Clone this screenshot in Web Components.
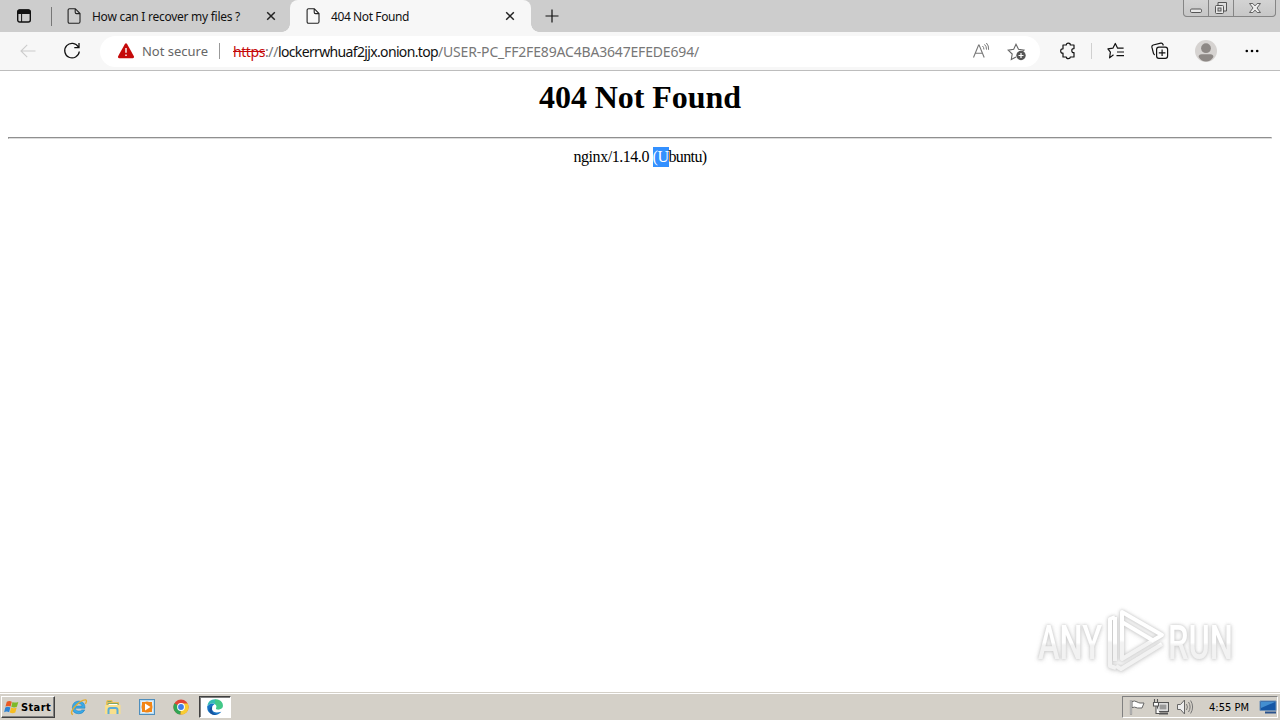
<!DOCTYPE html>
<html lang="en">
<head>
<meta charset="utf-8">
<title>404 Not Found</title>
<style>
  html, body { margin: 0; height: 100%; overflow: hidden; }
  body { background: #fff; font: 12px "Noto Sans", "Open Sans", sans-serif; color: #111; }
</style>
</head>
<body>
<desktop-screen>
  <tab-strip slot="browser">
    <browser-tab label="How can I recover my files ?" text-width="148"></browser-tab>
    <browser-tab label="404 Not Found" text-width="78" active></browser-tab>
  </tab-strip>
  <nav-bar slot="browser"></nav-bar>
  <error-page slot="browser"></error-page>
  <task-bar slot="taskbar"></task-bar>
  <run-watermark slot="overlay"></run-watermark>
</desktop-screen>

<script>
const icons = {
  tabs: [16, 16, `<rect x="1.7" y="2" width="12.6" height="12" rx="2" fill="none" stroke="#111" stroke-width="1.4"/><path d="M1.5 6V3.5Q1.5 1.6 3.5 1.6h9q2 0 2 1.9V6z" fill="#111"/><path d="M5.6 6v8" stroke="#111"/>`],
  page: [14, 16, `<path d="M2.5.7h5.8L13 5.5v8.3q0 1.4-1.4 1.4H2.5q-1.4 0-1.4-1.4V2.1Q1.1.7 2.5.7zM8.2.8v3.5q0 1.3 1.3 1.3H13" fill="none" stroke="#222" stroke-width="1.1"/>`],
  close: [10, 10, `<path d="M1.2 1.2l7.6 7.6M8.8 1.2L1.2 8.8" stroke="#222" stroke-width="1.5"/>`],
  plus: [14, 14, `<path d="M7 .5v13M.5 7h13" stroke="#111" stroke-width="1.2"/>`],
  back: [16, 14, `<path d="M15.5 7H1M7.2.8L1 7l6.2 6.2" fill="none" stroke="#ccc" stroke-width="1.1"/>`],
  reload: [18, 18, `<path d="M15.4 5A7.3 7.3 0 1 0 16.3 9.5M16 1v4.7h-4.7" fill="none" stroke="#111" stroke-width="1.3"/>`],
  warn: [18, 16, `<path d="M7.9 1.1q1.1-1.5 2.2 0l6.8 12.2q.6 1.7-1 1.9H2.1q-1.6-.2-1-1.9z" fill="#c50a0a"/><path d="M9 5v4.8M9 11.4v1.5" stroke="#fff" stroke-width="1.4"/>`],
  read: [18, 18, `<path d="M1.5 15.5L6.6 3h.5l5.1 12.5M3.2 11.3h7.3" fill="none" stroke="#777" stroke-width="1.1"/><path d="M10.5 4q1.5 1.4 1.4 3.5M12.5 2.4q2.2 2 2 5.2M14.4 1q2.6 2.6 2.2 6.8" fill="none" stroke="#777"/>`],
  addstar: [20, 20, `<path d="M9 16l-4.7 2.5.9-5.5-4-3.9 5.5-.8L9 3.2l2.5 5.1 5.5.8-1.7 1.7" fill="none" stroke="#666" stroke-width="1.1"/><circle cx="14" cy="14.5" r="4.7" fill="#555"/><path d="M14 12v5M11.5 14.5h5" stroke="#fff" stroke-width="1.2"/>`],
  puzzle: [18, 18, `<path d="M4 3h3.300q0-1.800 2-1.800t2 1.800H15v3.600q-2.200-.2-2.200 2t2.200 2.100V15h-3.700q0 1.700-2 1.700t-2-1.700H4v-3.800Q1.700 11.400 1.700 9T4 6.800z" fill="none" stroke="#111" stroke-width="1.200" stroke-linejoin="round"/>`],
  favs: [18, 18, `<path d="M6.500 12.800l-3.900 3.100.8-5.800L.9 6.900l5-.7L8.300 1.500l2.300 4.700h6M10 10h7M9.500 13.700H17" fill="none" stroke="#111" stroke-width="1.200" stroke-linejoin="round"/>`],
  collections: [18, 18, `<path d="M3.800 12.800Q2.700 12.500 2.400 11.200L.9 5.200Q.6 3.500 2.200 3L9.800 1.200q1.700-.3 2.200 1.300l.3 1" fill="none" stroke="#111" stroke-width="1.200"/><rect x="5.600" y="5.200" width="11" height="11.200" rx="2.300" fill="none" stroke="#111" stroke-width="1.200"/><path d="M11.100 7.500v6.600M7.800 10.800h6.600" stroke="#111" stroke-width="1.200"/>`],
  avatar: [22, 22, `<circle cx="11" cy="11" r="11" fill="#d6d3d1"/><circle cx="11" cy="8.200" r="4.900" fill="#8d8885"/><path d="M3.600 17q0-2.800 3-2.800h8.800q3 0 3 2.800Q15.500 21.500 11 21.500T3.600 17z" fill="#8d8885"/>`],
  dots: [14, 4, `<circle cx="1.800" cy="2" r="1.300"/><circle cx="7" cy="2" r="1.300"/><circle cx="12.200" cy="2" r="1.300"/>`],
  min: [14, 14, `<rect x="1.500" y="8" width="11" height="3.500" rx="1.200" fill="#e8e8e8" stroke="#555"/>`],
  restore: [14, 14, `<path d="M4 4V1.500h8.500V10H10" fill="#ddd" stroke="#555"/><rect x="1.500" y="4.500" width="8" height="8" rx="1" fill="#e8e8e8" stroke="#555"/><rect x="4" y="7" width="3" height="3" fill="#ccc" stroke="#555"/>`],
  wclose: [14, 14, `<path d="M1.500 2.500h3.300L7 4.900l2.200-2.400h3.300L9 7l3.500 4.500H9.200L7 9.100l-2.200 2.400H1.500L5 7z" fill="#eee" stroke="#555" stroke-width=".9"/>`],
  flagwin: [16, 16, `<path d="M2.800 2.700q2.500-1.300 5 0L6.600 7.500q-2.500-1.200-5.100 0z" fill="#ea5a24"/><path d="M8.500 3q2.700 1.200 5.800-.1l-1.400 4.900q-2.800 1.200-5.600 0z" fill="#7db928"/><path d="M1.300 8.400q2.600-1.200 5.100 0l-1.300 4.800q-2.500-1.200-5 0z" fill="#2e83d4"/><path d="M7.100 8.600q2.700 1.200 5.600 0l-1.400 4.900q-2.800 1.300-5.500-.1z" fill="#f6bd22"/>`],
  ie: [18, 18, `<path d="M15 10.200H5.200q.2 2.900 3.600 2.900 2 0 3-1.200h3Q13 15.800 8.800 15.800 2.300 15.500 2.300 9.400 2.700 3.300 9 3q6.200.5 6 7.200zM5.300 8h6.800Q11.700 5.500 8.800 5.500T5.300 8z" fill="#3aaae6" stroke="#1979bb" stroke-width=".5"/><path d="M3 16.500Q-.5 15.500 4 9.600 11 1.500 15.700 1.900q1.600.8-.3 4" fill="none" stroke="#e5ad2e" stroke-width="1.400"/>`],
  folder: [18, 18, `<path d="M2 4l1-2h5l1 2h6v11H2z" fill="#e8bf5b"/><path d="M3.500 3.500h4M4 5.500h10v3H4z" stroke="#80a665" fill="#fff"/><path d="M1 7h15.500v9H1z" fill="#f8df8c"/><path d="M4.500 16v-4q0-2 2-2h5q2 0 2 2v4" fill="none" stroke="#58acd8" stroke-width="2"/>`],
  media: [18, 18, `<rect x="1.500" y="1.500" width="15" height="15" fill="#b8dcf2" stroke="#4f8ebc"/><rect x="3.500" y="3.500" width="11" height="11" fill="#f28616" stroke="#e2effa"/><circle cx="9" cy="9" r="5.500" fill="#f28616"/><path d="M7 5.500v7L12.500 9z" fill="#fff"/>`],
  chrome: [18, 18, `<circle cx="9" cy="9" r="7.600" fill="#e14434"/><path d="M9 9L2.400 5.200A7.600 7.600 0 0 0 8.500 16.600z" fill="#30a554"/><path d="M9 9l-.5 7.600A7.600 7.600 0 0 0 15.700 5.400H9z" fill="#f8cd32"/><circle cx="9" cy="9" r="3.900" fill="#fff"/><circle cx="9" cy="9" r="2.900" fill="#3f7ee8"/>`],
  edge: [18, 18, `<path d="M1.200 8Q2.300 1.400 9 1.200q7.500.3 7.900 6.300-.2 3.800-4.200 3.900-3.200 0-2.700-1.200 1.500-2.200-.8-4Q5 4.300 1.200 8z" fill="#35bdb4"/><path d="M9 1.200q7.500.3 7.900 6.300-.2 3.800-4.200 3.900-3.200 0-2.700-1.200 1.500-2.200-.8-4z" fill="#4dce68" opacity=".6"/><path d="M1.100 8.500q3.300-4.400 7.500-2.300-3.400 1.500-2.600 5.300 1.500 4.500 9.300 2.300-2.400 3.300-6.800 3.100Q1 16.200 1.100 8.500z" fill="#1674c5"/><path d="M6 11.500q-.2 4 4.500 5.200-3.800.9-6.500-1.600-2-4.500 2.200-7z" fill="#15539e"/>`],
  flag: [18, 18, `<path d="M3 2v14.500" stroke="#777" stroke-width="2.200"/><path d="M4 3.500q2.500-1.200 5 .4 1.800 1 3 1.100h4l-2 5H9.500q-3-1.500-5.500-.4z" fill="#fff" stroke="#666"/><path d="M3 2v14" stroke="#fff" stroke-width=".8"/>`],
  network: [18, 18, `<rect x="5.500" y="4.500" width="11" height="9" fill="#c6c6c6" stroke="#555"/><rect x="7" y="6" width="8" height="6" fill="#999" stroke="#eee"/><path d="M7 15.500h9" stroke="#555" stroke-width="2"/><path d="M2.500 1v3M5.500 1v3M1.500 4.500h5V8h-5zM4 8v7.500h4" fill="#fff" stroke="#555" stroke-width="1.100"/>`],
  sound: [18, 18, `<path d="M1.500 6.500h3l4-4.500v14l-4-4.500h-3z" fill="#eee" stroke="#666"/><path d="M10.500 6q1.800 3 0 6M12.500 4q3.200 5 0 10M14.600 2.500q4 6.500 0 13" fill="none" stroke="#777"/>`],
  screen: [18, 16, `<path d="M1 2h16v9.500H1z" fill="#1557a6" stroke="#6d91b8"/><path d="M2 3h14L2 9z" fill="#438ed0"/><path d="M6 13.500h11" stroke="#29528c" stroke-width="2"/>`]
};

class UiIcon extends HTMLElement {
  connectedCallback() {
    const [w, h, body] = icons[this.getAttribute("name")];
    this.attachShadow({ mode: "open" }).innerHTML = `
      <style>:host { display: block; flex: none; width: ${w}px; height: ${h}px; } svg { display: block; }</style>
      <svg width="${w}" height="${h}" viewBox="0 0 ${w} ${h}">${body}</svg>`;
  }
}

// Single line label, tracked so that it fills the given width.
class UiLabel extends HTMLElement {
  connectedCallback() {
    this.attachShadow({ mode: "open" }).innerHTML = `
      <style>
        :host { display: block; flex: none; }
        span { display: block; width: max-content; white-space: pre; }
      </style><span><slot></slot></span>`;
    const span = this.shadowRoot.querySelector("span");
    const width = parseFloat(this.getAttribute("width"));
    const gap = (width - span.getBoundingClientRect().width) / this.textContent.length;
    span.style.letterSpacing = `${gap}px`;
    this.style.width = `${width}px`;
  }
}

class DesktopScreen extends HTMLElement {
  constructor() {
    super();
    this.attachShadow({ mode: "open" }).innerHTML = `
      <style>
        :host { display: flex; flex-direction: column; width: 1280px; height: 720px; position: relative; }
        main { flex: 1; display: flex; flex-direction: column; min-height: 0; }
      </style>
      <main><slot name="browser"></slot></main>
      <slot name="taskbar"></slot>
      <slot name="overlay"></slot>`;
  }
}

class TabStrip extends HTMLElement {
  constructor() {
    super();
    this.attachShadow({ mode: "open" }).innerHTML = `
      <style>
        :host { display: flex; flex: none; height: 32px; align-items: center; background: #cdcdcd; }
        .menu { margin-left: 16px; }
        .sep { width: 1px; height: 19px; background: #777; margin: 0 0 0 19px; }
        .plus { margin-left: 14px; }
        .win { display: grid; grid-template-columns: 24px 24px 41px; gap: 1px; height: 16px; margin-left: auto;
          margin-right: 4px; align-self: start; background: #858585; border: 1px solid #858585; border-top: 0;
          border-radius: 0 0 4px 4px; overflow: hidden; }
        .win div { display: grid; place-items: center; background: linear-gradient(#d3d3d3, #c7c7c7); }
      </style>
      <ui-icon class="menu" name="tabs"></ui-icon>
      <div class="sep"></div>
      <slot></slot>
      <ui-icon class="plus" name="plus"></ui-icon>
      <div class="win">
        <div><ui-icon name="min"></ui-icon></div>
        <div><ui-icon name="restore"></ui-icon></div>
        <div><ui-icon name="wclose"></ui-icon></div>
      </div>`;
  }
}

class BrowserTab extends HTMLElement {
  connectedCallback() {
    this.attachShadow({ mode: "open" }).innerHTML = `
      <style>
        :host { display: flex; box-sizing: border-box; align-items: center; width: 237px; height: 32px; padding: 0 13px 0 15px; }
        :host([active]) { width: 241px; padding: 0 16px 0 16px; margin-left: 1px; border-radius: 8px 8px 0 0; background: #f7f7f7; position: relative; }
        :host([active])::before, :host([active])::after { content: ""; position: absolute; bottom: 0; width: 8px; height: 8px; }
        :host([active])::before { left: -8px; background: radial-gradient(circle at 0 0, transparent 7.500px, #f7f7f7 8px); }
        :host([active])::after { right: -8px; background: radial-gradient(circle at 100% 0, transparent 7.500px, #f7f7f7 8px); }
        ui-label { margin: 0 auto 0 11px; }
      </style>
      <ui-icon name="page"></ui-icon>
      <ui-label width="${this.getAttribute("text-width")}">${this.getAttribute("label")}</ui-label>
      <ui-icon name="close"></ui-icon>`;
  }
}

class NavBar extends HTMLElement {
  constructor() {
    super();
    this.attachShadow({ mode: "open" }).innerHTML = `
      <style>
        :host { display: flex; flex: none; box-sizing: border-box; height: 39px; align-items: center; padding: 0 0 0 20px; background: #f7f7f7; border-bottom: 1px solid #bdbdbd; font-size: 14px; }
        .address { display: flex; align-items: center; box-sizing: border-box; width: 940px; height: 31px; margin-left: 19px; padding: 0 13px 0 17px; border-radius: 16px; background: #fff; }
        .state { margin-left: 7px; color: #666; font-size: 13px; }
        .sep { width: 1px; height: 16px; background: #999; margin: 0 13px 0 11px; }
        .url { display: flex; color: #777; }
        .scheme { color: #c50a0a; text-decoration: line-through; }
        .host { color: #111; }
        .read { margin-left: auto; margin-right: 17px; }
        .tools { display: flex; align-items: center; margin-left: 19px; }
        .tools .sep { margin: 0 15px 0 14px; background: #d0d0d0; }
        .tools ui-icon + ui-icon { margin-left: 26px; }
        .tools ui-icon[name="dots"] { margin-left: 28px; }
      </style>
      <ui-icon name="back"></ui-icon>
      <ui-icon name="reload" style="margin-left:27px"></ui-icon>
      <div class="address">
        <ui-icon name="warn"></ui-icon>
        <ui-label class="state" width="66">Not secure</ui-label>
        <div class="sep"></div>
        <div class="url">
          <ui-label class="scheme" width="32">https</ui-label>
          <ui-label width="13">://</ui-label>
          <ui-label class="host" width="160">lockerrwhuaf2jjx.onion.top</ui-label>
          <ui-label width="261">/USER-PC_FF2FE89AC4BA3647EFEDE694/</ui-label>
        </div>
        <ui-icon class="read" name="read"></ui-icon>
        <ui-icon name="addstar"></ui-icon>
      </div>
      <div class="tools">
        <ui-icon name="puzzle"></ui-icon>
        <div class="sep"></div>
        <ui-icon name="favs"></ui-icon>
        <ui-icon name="collections"></ui-icon>
        <ui-icon name="avatar"></ui-icon>
        <ui-icon name="dots"></ui-icon>
      </div>`;
  }
}

class ErrorPage extends HTMLElement {
  constructor() {
    super();
    this.attachShadow({ mode: "open" }).innerHTML = `
      <style>
        :host { display: flex; flex-direction: column; align-items: center; flex: 1; padding: 8px 8px 0; color: #000; font-family: "Liberation Serif", "Times New Roman", serif; }
        h1 { margin: 0; font-size: 32px; line-height: 37px; }
        hr { width: 100%; box-sizing: border-box; margin: 21px 0 8px; border: 1px solid; border-color: #8f8f8f #ddd #ddd #8f8f8f; }
        p { display: flex; margin: 0; font-size: 16px; line-height: 20px; }
        .picked { background: #3390ff; color: #fff; }
      </style>
      <h1><ui-label width="202">404 Not Found</ui-label></h1>
      <hr>
      <p><ui-label width="79">nginx/1.14.0 </ui-label><ui-label class="picked" width="16">(U</ui-label><ui-label width="38">buntu)</ui-label></p>`;
  }
}

class TaskBar extends HTMLElement {
  constructor() {
    super();
    this.attachShadow({ mode: "open" }).innerHTML = `
      <style>
        :host { display: flex; flex: none; box-sizing: border-box; height: 28px; align-items: center; border-top: 1px solid #d4d0c8; box-shadow: inset 0 1px #fff; background: #d4d0c8; font: 11px "DejaVu Sans Condensed", "DejaVu Sans", sans-serif; color: #000; padding: 1px 2px 0 1px; }
        .start { display: flex; align-items: center; gap: 1px; box-sizing: border-box; width: 54px; height: 22px; padding-left: 2px; border: 1px solid; border-color: #fff #404040 #404040 #fff; box-shadow: inset -1px -1px #808080; font-weight: bold; }
        .apps { display: flex; align-items: center; gap: 16px; margin-left: 15px; }
        .open { display: grid; place-items: center; box-sizing: border-box; width: 32px; height: 22px; margin-left: -7px; border: 1px solid; border-color: #404040 #fff #fff #404040; box-shadow: inset 1px 1px #808080; background: #fff; }
        .tray { display: flex; align-items: center; box-sizing: border-box; width: 156px; height: 22px; margin-left: auto; padding: 0 0 0 5px; border: 1px solid; border-color: #808080 #fff #fff #808080; }
        .tray ui-icon + ui-icon { margin-left: 6px; }
        .tray ui-label { margin: 0 auto 0 15px; }
      </style>
      <div class="start"><ui-icon name="flagwin"></ui-icon><ui-label width="30">Start</ui-label></div>
      <div class="apps">
        <ui-icon name="ie"></ui-icon>
        <ui-icon name="folder"></ui-icon>
        <ui-icon name="media"></ui-icon>
        <ui-icon name="chrome"></ui-icon>
        <div class="open"><ui-icon name="edge"></ui-icon></div>
      </div>
      <div class="tray">
        <ui-icon name="flag"></ui-icon>
        <ui-icon name="network"></ui-icon>
        <ui-icon name="sound"></ui-icon>
        <ui-label width="40">4:55 PM</ui-label>
        <ui-icon name="screen"></ui-icon>
      </div>`;
  }
}

class RunWatermark extends HTMLElement {
  constructor() {
    super();
    this.attachShadow({ mode: "open" }).innerHTML = `
      <style>
        :host { display: block; position: absolute; left: 1030px; top: 600px; opacity: .65; }
        svg { display: block; overflow: visible; filter: drop-shadow(0 0 1.500px #aaa) drop-shadow(0 1px 2px #ccc); }
        text { font: 500 49px Roboto, "Liberation Sans", sans-serif; fill: url(#fade); }
      </style>
      <svg width="245" height="80">
        <defs><linearGradient id="fade" x2="0" y2="1"><stop offset=".5" stop-color="#fff"/><stop offset=".55" stop-color="#ececec"/></linearGradient></defs>
        <text x="8" y="59" textLength="64" lengthAdjust="spacingAndGlyphs">ANY</text>
        <g fill="none" stroke="url(#fade)" stroke-width="4" stroke-linejoin="round">
          <path d="M85 17l-5 2v47l6 2M92 12l40 23-40 24z"/>
          <path d="M92 22l32 19M85 17v44M132 44L91 69l-5-3"/>
        </g>
        <text x="138" y="59" textLength="65" lengthAdjust="spacingAndGlyphs">RUN</text>
      </svg>`;
  }
}

customElements.define("ui-icon", UiIcon);
customElements.define("ui-label", UiLabel);
customElements.define("browser-tab", BrowserTab);
customElements.define("tab-strip", TabStrip);
customElements.define("nav-bar", NavBar);
customElements.define("error-page", ErrorPage);
customElements.define("task-bar", TaskBar);
customElements.define("run-watermark", RunWatermark);
customElements.define("desktop-screen", DesktopScreen);
</script>
</body>
</html>
